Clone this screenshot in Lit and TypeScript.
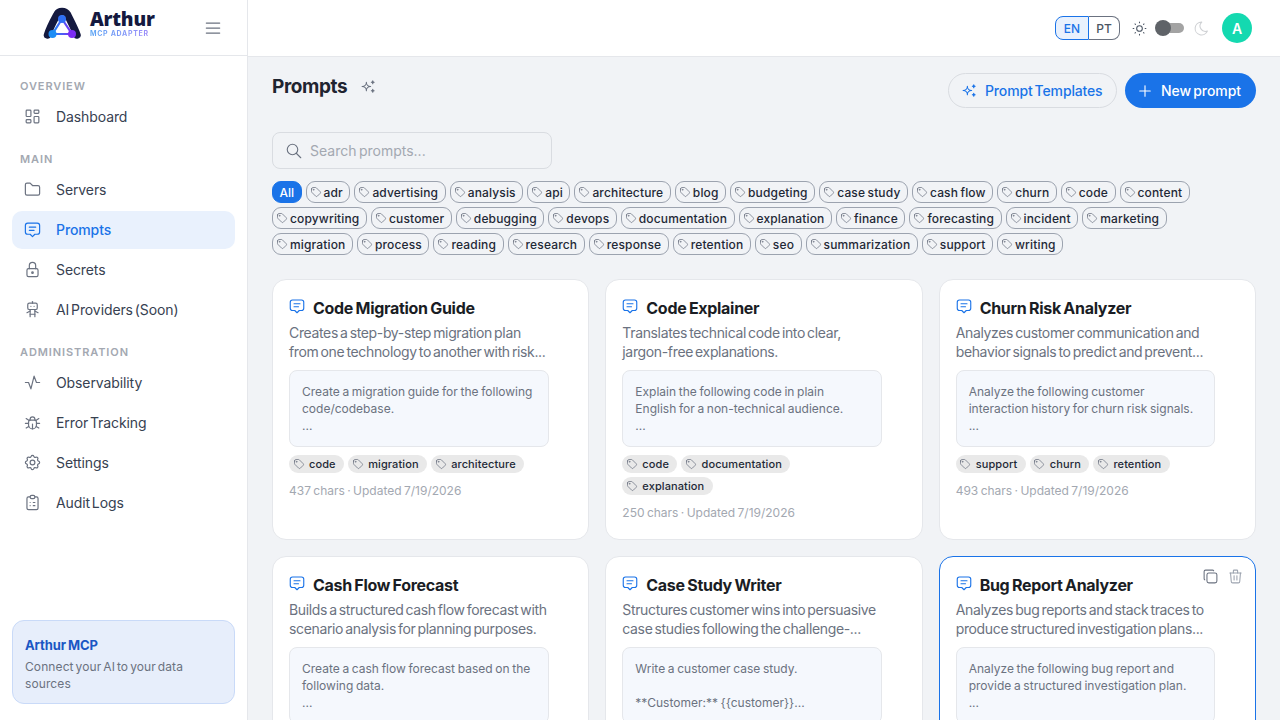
import { LitElement, html, css, svg } from "lit";
import { customElement } from "lit/decorators.js";

const I: Record<string, string[]> = {
  dashboard: ["M5 4h4a1 1 0 0 1 1 1v6a1 1 0 0 1 -1 1h-4a1 1 0 0 1 -1 -1v-6a1 1 0 0 1 1 -1", "M5 16h4a1 1 0 0 1 1 1v2a1 1 0 0 1 -1 1h-4a1 1 0 0 1 -1 -1v-2a1 1 0 0 1 1 -1", "M15 12h4a1 1 0 0 1 1 1v6a1 1 0 0 1 -1 1h-4a1 1 0 0 1 -1 -1v-6a1 1 0 0 1 1 -1", "M15 4h4a1 1 0 0 1 1 1v2a1 1 0 0 1 -1 1h-4a1 1 0 0 1 -1 -1v-2a1 1 0 0 1 1 -1"],
  folder: ["M5 4h4l3 3h7a2 2 0 0 1 2 2v8a2 2 0 0 1 -2 2h-14a2 2 0 0 1 -2 -2v-11a2 2 0 0 1 2 -2"],
  message: ["M8 9h8", "M8 13h6", "M9 18h-3a3 3 0 0 1 -3 -3v-8a3 3 0 0 1 3 -3h12a3 3 0 0 1 3 3v8a3 3 0 0 1 -3 3h-3l-3 3l-3 -3z"],
  lock: ["M5 13a2 2 0 0 1 2 -2h10a2 2 0 0 1 2 2v6a2 2 0 0 1 -2 2h-10a2 2 0 0 1 -2 -2v-6z", "M11 16a1 1 0 1 0 2 0a1 1 0 0 0 -2 0", "M8 11v-4a4 4 0 1 1 8 0v4"],
  robot: ["M6 6a2 2 0 0 1 2 -2h8a2 2 0 0 1 2 2v4a2 2 0 0 1 -2 2h-8a2 2 0 0 1 -2 -2z", "M12 2v2", "M9 12v9", "M15 12v9", "M5 16l4 -2", "M15 14l4 2", "M9 18h6", "M10 8v.01", "M14 8v.01"],
  activity: ["M3 12h4l3 8l4 -16l3 8h4"],
  bug: ["M9 9v-1a3 3 0 0 1 6 0v1", "M8 9h8a6 6 0 0 1 1 3v3a5 5 0 0 1 -10 0v-3a6 6 0 0 1 1 -3", "M3 13l4 0", "M17 13l4 0", "M12 20l0 -6", "M4 19l3.35 -2", "M20 19l-3.35 -2", "M4 7l3.75 2.4", "M20 7l-3.75 2.4"],
  settings: ["M10.325 4.317c.426 -1.756 2.924 -1.756 3.35 0a1.724 1.724 0 0 0 2.573 1.066c1.543 -.94 3.31 .826 2.37 2.37a1.724 1.724 0 0 0 1.065 2.572c1.756 .426 1.756 2.924 0 3.35a1.724 1.724 0 0 0 -1.066 2.573c.94 1.543 -.826 3.31 -2.37 2.37a1.724 1.724 0 0 0 -2.572 1.065c-.426 1.756 -2.924 1.756 -3.35 0a1.724 1.724 0 0 0 -2.573 -1.066c-1.543 .94 -3.31 -.826 -2.37 -2.37a1.724 1.724 0 0 0 -1.065 -2.572c-1.756 -.426 -1.756 -2.924 0 -3.35a1.724 1.724 0 0 0 1.066 -2.573c-.94 -1.543 .826 -3.31 2.37 -2.37c1 .608 2.296 .07 2.572 -1.065z", "M9 12a3 3 0 1 0 6 0a3 3 0 0 0 -6 0"],
  clipboard: ["M9 5h-2a2 2 0 0 0 -2 2v12a2 2 0 0 0 2 2h10a2 2 0 0 0 2 -2v-12a2 2 0 0 0 -2 -2h-2", "M9 5a2 2 0 0 1 2 -2h2a2 2 0 0 1 2 2v0a2 2 0 0 1 -2 2h-2a2 2 0 0 1 -2 -2z", "M9 12l.01 0", "M13 12l2 0", "M9 16l.01 0", "M13 16l2 0"],
  tag: ["M6.5 7.5a1 1 0 1 0 2 0a1 1 0 1 0 -2 0", "M3 6v5.172a2 2 0 0 0 .586 1.414l7.71 7.71a2.41 2.41 0 0 0 3.408 0l5.592 -5.592a2.41 2.41 0 0 0 0 -3.408l-7.71 -7.71a2 2 0 0 0 -1.414 -.586h-5.172a3 3 0 0 0 -3 3z"],
  sparkles: ["M16 18a2 2 0 0 1 2 2a2 2 0 0 1 2 -2a2 2 0 0 1 -2 -2a2 2 0 0 1 -2 2zm0 -12a2 2 0 0 1 2 2a2 2 0 0 1 2 -2a2 2 0 0 1 -2 -2a2 2 0 0 1 -2 2zm-7 12a6 6 0 0 1 6 -6a6 6 0 0 1 -6 -6a6 6 0 0 1 -6 6a6 6 0 0 1 6 6z"],
  search: ["M3 10a7 7 0 1 0 14 0a7 7 0 1 0 -14 0", "M21 21l-6 -6"],
  copy: ["M7 9.667a2.667 2.667 0 0 1 2.667 -2.667h8.666a2.667 2.667 0 0 1 2.667 2.667v8.666a2.667 2.667 0 0 1 -2.667 2.667h-8.666a2.667 2.667 0 0 1 -2.667 -2.667z", "M4.012 16.737a2.005 2.005 0 0 1 -1.012 -1.737v-10c0 -1.1 .9 -2 2 -2h10c.75 0 1.158 .385 1.5 1"],
  trash: ["M4 7l16 0", "M10 11l0 6", "M14 11l0 6", "M5 7l1 12a2 2 0 0 0 2 2h8a2 2 0 0 0 2 -2l1 -12", "M9 7v-3a1 1 0 0 1 1 -1h4a1 1 0 0 1 1 1v3"],
  sun: ["M8 12a4 4 0 1 0 8 0a4 4 0 1 0 -8 0", "M3 12h1m8 -9v1m8 8h1m-9 8v1m-6.4 -15.4l.7 .7m12.1 -.7l-.7 .7m0 11.4l.7 .7m-12.1 -.7l-.7 .7"],
  moon: ["M12 3c.132 0 .263 0 .393 0a7.5 7.5 0 0 0 7.92 12.446a9 9 0 1 1 -8.313 -12.454z"],
  menu: ["M4 6l16 0", "M4 12l16 0", "M4 18l16 0"],
  plus: ["M12 5l0 14", "M5 12l14 0"],
};

const icon = (name: string, size: number, sw = 1.5) => html`<svg class="ic" width=${size} height=${size} viewBox="0 0 24 24" fill="none" stroke="currentColor" stroke-width=${sw} stroke-linecap="round" stroke-linejoin="round">${I[name].map((d) => svg`<path d=${d}></path>`)}</svg>`;

const nav = [
  { label: "OVERVIEW", items: [["dashboard", "Dashboard"]] },
  { label: "MAIN", items: [["folder", "Servers"], ["message", "Prompts"], ["lock", "Secrets"], ["robot", "AI Providers (Soon)"]] },
  { label: "ADMINISTRATION", items: [["activity", "Observability"], ["bug", "Error Tracking"], ["settings", "Settings"], ["clipboard", "Audit Logs"]] },
];

const tagRows = [
  ["adr", "advertising", "analysis", "api", "architecture", "blog", "budgeting", "case study", "cash flow", "churn", "code", "content"],
  ["copywriting", "customer", "debugging", "devops", "documentation", "explanation", "finance", "forecasting", "incident", "marketing"],
  ["migration", "process", "reading", "research", "response", "retention", "seo", "summarization", "support", "writing"],
];

const cards = [
  { t: "Code Migration Guide", d: "Creates a step-by-step migration plan\nfrom one technology to another with risk...", p: "Create a migration guide for the following\ncode/codebase.\n...", tags: ["code", "migration", "architecture"], m: "437 chars · Updated 7/19/2026" },
  { t: "Code Explainer", d: "Translates technical code into clear,\njargon-free explanations.", p: "Explain the following code in plain\nEnglish for a non-technical audience.\n...", tags: ["code", "documentation", "explanation"], m: "250 chars · Updated 7/19/2026" },
  { t: "Churn Risk Analyzer", d: "Analyzes customer communication and\nbehavior signals to predict and prevent...", p: "Analyze the following customer\ninteraction history for churn risk signals.\n...", tags: ["support", "churn", "retention"], m: "493 chars · Updated 7/19/2026" },
  { t: "Cash Flow Forecast", d: "Builds a structured cash flow forecast with\nscenario analysis for planning purposes.", p: "Create a cash flow forecast based on the\nfollowing data.\n...", tags: ["finance", "cash flow", "forecasting"], m: "410 chars · Updated 7/19/2026" },
  { t: "Case Study Writer", d: "Structures customer wins into persuasive\ncase studies following the challenge-...", p: "Write a customer case study.\n\n**Customer:** {{customer}}...", tags: ["case study", "marketing", "writing"], m: "380 chars · Updated 7/19/2026" },
  { t: "Bug Report Analyzer", d: "Analyzes bug reports and stack traces to\nproduce structured investigation plans...", p: "Analyze the following bug report and\nprovide a structured investigation plan.\n...", tags: ["debugging", "analysis", "code"], m: "455 chars · Updated 7/19/2026", hover: true },
];

@customElement("app-root")
export class AppRoot extends LitElement {
  static styles = css`
    :host {
      display: block; width: 1280px; height: 720px; overflow: hidden;
      font-family: Inter, "Liberation Sans", sans-serif; word-spacing: -1.5px;
      color: #1f2937; background: #f1f3f6;
    }
    * { box-sizing: border-box; }
    .ic { display: block; flex: none; }
    .shell { display: flex; height: 720px; }
    .side { width: 248px; flex: none; background: #fff; border-right: 1px solid #e5e7eb; display: flex; flex-direction: column; }
    .brand { height: 56px; flex: none; border-bottom: 1px solid #e5e7eb; display: flex; align-items: center; padding-left: 43px; }
    .logo { margin-bottom: 8px; display: block; flex: none; }
    .logo-text { margin: 0 0 7.5px 7px; display: flex; flex-direction: column; width: 66px; }
    .arthur { font-family: "Open Sans", sans-serif; font-weight: 800; font-size: 19px; line-height: 17px; color: #14193f; letter-spacing: -.2px; }
    .adapter { margin-top: 2px; font-size: 7px; line-height: 7px; font-weight: 700; letter-spacing: .7px; white-space: nowrap; word-spacing: 0; background: linear-gradient(90deg, #5aa5f5, #a78bfa); -webkit-background-clip: text; background-clip: text; color: transparent; }
    .burger { margin-left: 47px; color: #6b7280; }
    .navwrap { flex: 1; padding: 22.5px 12px 0; }
    .sec { font-size: 11px; line-height: 16px; font-weight: 600; letter-spacing: .9px; color: #a3a8b1; padding-left: 8px; margin: -1px 0 4px; }
    .group { margin-bottom: 16px; }
    .item { height: 38px; margin-bottom: 2px; border-radius: 10px; display: flex; align-items: center; padding-left: 11px; gap: 14px; font-size: 14px; color: #374151; letter-spacing: -.1px; word-spacing: -2px; }
    .item .ic { color: #6b7280; }
    .item.on { background: #e9f1fd; color: #1a73e8; font-weight: 500; }
    .item.on .ic { color: #1a73e8; }
    .promo { margin: 0 12px 16px; height: 84px; border-radius: 12px; background: #e7eefb; border: 1px solid #c9daf8; padding: 15px 12px; }
    .promo b { display: block; font-size: 13px; line-height: 18px; font-weight: 700; letter-spacing: -.1px; word-spacing: -1px; color: #1a56c4; }
    .promo span { display: block; margin-top: 5px; font-size: 12px; line-height: 16.5px; color: #6b7280; letter-spacing: .1px; }
    .right { flex: 1; min-width: 0; display: flex; flex-direction: column; }
    .top { height: 57px; flex: none; background: #fff; border-bottom: 1px solid #e5e7eb; display: flex; align-items: center; justify-content: flex-end; padding-right: 28px; }
    .lang { display: flex; font-size: 12px; font-weight: 500; height: 24px; }
    .lang span { display: flex; align-items: center; justify-content: center; width: 33px; border: 1px solid #6b7280; color: #4b5563; }
    .lang span:first-child { border: 1px solid #1a73e8; background: #e9f1fd; color: #1a73e8; border-radius: 8px 0 0 8px; width: 34px; }
    .lang span:last-child { border-left: 0; border-radius: 0 8px 8px 0; width: 31px; }
    .sun { margin-left: 11px; color: #4b5563; }
    .toggle { margin-left: 7px; width: 30px; height: 16px; display: flex; align-items: center; position: relative; }
    .track { width: 28px; height: 10px; margin-left: 1px; border-radius: 5px; background: #a3a3a3; }
    .knob { position: absolute; left: 0; top: 0; width: 16px; height: 16px; border-radius: 50%; background: #5f6368; }
    .moon { margin-left: 8px; color: #cfd1d4; }
    .avatar { margin-left: 12px; width: 30px; height: 30px; border-radius: 50%; background: #14d9b0; color: #fff; font-size: 14px; font-weight: 600; display: flex; align-items: center; justify-content: center; }
    .main { flex: 1; padding: 16px 24px 0; overflow: hidden; }
    .head { display: flex; align-items: center; height: 35px; }
    .head h1 { margin: -8px 0 0; font-size: 19px; line-height: 28px; font-weight: 700; letter-spacing: -.4px; color: #1f2430; }
    .head .spark { margin: -8px 0 0 13px; color: #6b7280; }
    .btns { margin-left: auto; display: flex; gap: 8px; }
    .btn { height: 35px; border-radius: 18px; display: flex; align-items: center; font-size: 14px; font-weight: 500; gap: 7px; letter-spacing: -.05px; }
    .btn.ghost { width: 169px; border: 1px solid #d9dce1; color: #1a73e8; padding-left: 12px; letter-spacing: -.15px; }
    .btn.solid { width: 131px; background: #1a73e8; color: #fff; padding-left: 11px; }
    .search { margin-top: 24px; width: 280px; height: 37px; border: 1px solid #d9dce1; border-radius: 8px; display: flex; align-items: center; padding-left: 12px; gap: 7px; font-size: 14px; color: #a3a8b1; }
    .search .ic { color: #6b7280; }
    .tags { margin-top: 12px; display: flex; flex-direction: column; gap: 4px; }
    .row { display: flex; gap: 4px; }
    .chip { height: 22px; border-radius: 9px; border: 1px solid #9ca3af; display: flex; align-items: center; padding: 0 6.5px 0 3px; gap: 2px; font-size: 12px; font-weight: 500; letter-spacing: .15px; color: #1f2937; white-space: nowrap; word-spacing: -1px; }
    .chip .ic { color: #6b7280; }
    .chip.all { background: #1a73e8; border-color: #1a73e8; color: #fff; padding: 0 6.5px; letter-spacing: 0; }
    .grid { margin-top: 24px; display: grid; grid-template-columns: repeat(3, 1fr); gap: 16px; }
    .card { position: relative; background: #fff; border: 1px solid #e5e7eb; border-radius: 14px; padding: 16px 16px 18px; }
    .card.hover { border-color: #1a73e8; }
    .tline { display: flex; gap: 7px; align-items: flex-start; margin-bottom: 3px; }
    .tline .ic { color: #1a73e8; margin: 1px 0 0 -1px; }
    .tline h3 { margin: 0; font-size: 16px; line-height: 24px; font-weight: 700; letter-spacing: -.3px; word-spacing: -1px; color: #1a1d24; }
    .desc { margin: 0; font-size: 14px; line-height: 19px; color: #6b7280; letter-spacing: -.35px; word-spacing: -1.5px; white-space: pre-line; }
    .tool { position: absolute; top: 11px; right: 11px; display: flex; gap: 8px; color: #9ca3af; }
    .tool .ic:first-child { color: #6b7280; }
    .pbox { margin-top: 9px; width: 259.5px; border: 1px solid #e5e7eb; background: #f5f8fd; border-radius: 8px; padding: 12px; font-size: 12px; line-height: 17px; color: #6b7280; white-space: pre-line; word-spacing: -.7px; }
    .ctags { margin-top: 8px; max-width: 258px; display: flex; flex-wrap: wrap; gap: 4px; }
    .ct { height: 18px; border-radius: 9px; background: #e9e9e9; display: flex; align-items: center; padding: 0 8.5px 0 3.5px; gap: 4.5px; font-size: 11px; font-weight: 500; letter-spacing: .1px; color: #1f2937; white-space: nowrap; word-spacing: 0; }
    .ct .ic { color: #6b7280; }
    .meta { margin-top: 9px; font-size: 12px; line-height: 17px; color: #a3a8b1; word-spacing: -1px; }
  `;

  render() {
    return html`<div class="shell">
      <aside class="side">
        <div class="brand">
          <svg class="logo" width="40" height="33" viewBox="0 0 40 33" fill="none">
            <defs><linearGradient id="lg" x1="9" y1="0" x2="29" y2="0" gradientUnits="userSpaceOnUse"><stop offset="0" stop-color="#1d8df5"/><stop offset="1" stop-color="#7c2df5"/></linearGradient></defs>
            <path d="M4.500 28C7 20 11 13 14 7.500C16 3.500 22 3.500 24.500 7.500C27 13 31 20 34 28" stroke="#14193f" stroke-width="7.500" stroke-linecap="round"/>
            <path d="M19 12L9.500 27H29L19 12Z" stroke="url(#lg)" stroke-width="2.200" fill="#fff"/>
            <circle cx="19" cy="12" r="4" fill="#2f6ff5"/><circle cx="9.500" cy="27" r="4" fill="#1d8df5"/><circle cx="29" cy="27" r="4" fill="#7c2df5"/>
          </svg>
          <div class="logo-text"><span class="arthur">Arthur</span><span class="adapter">MCP ADAPTER</span></div>
          <span class="burger">${icon("menu", 20)}</span>
        </div>
        <div class="navwrap">
          ${nav.map((g) => html`<div class="group"><div class="sec">${g.label}</div>
            ${g.items.map(([ic, l]) => html`<div class="item ${l === "Prompts" ? "on" : ""}">${icon(ic, 19)}<span>${l}</span></div>`)}
          </div>`)}
        </div>
        <div class="promo"><b>Arthur MCP</b><span>Connect your AI to your data sources</span></div>
      </aside>
      <div class="right">
        <header class="top">
          <div class="lang"><span>EN</span><span>PT</span></div>
          <span class="sun">${icon("sun", 17)}</span>
          <div class="toggle"><div class="track"></div><div class="knob"></div></div>
          <span class="moon">${icon("moon", 17)}</span>
          <div class="avatar">A</div>
        </header>
        <main class="main">
          <div class="head">
            <h1>Prompts</h1><span class="spark">${icon("sparkles", 17)}</span>
            <div class="btns">
              <div class="btn ghost">${icon("sparkles", 17)}<span>Prompt Templates</span></div>
              <div class="btn solid">${icon("plus", 18)}<span>New prompt</span></div>
            </div>
          </div>
          <div class="search">${icon("search", 18)}<span>Search prompts...</span></div>
          <div class="tags">
            ${tagRows.map((r, i) => html`<div class="row">${i === 0 ? html`<div class="chip all">All</div>` : ""}${r.map((t) => html`<div class="chip">${icon("tag", 12)}<span>${t}</span></div>`)}</div>`)}
          </div>
          <div class="grid">
            ${cards.map((c) => html`<article class="card ${c.hover ? "hover" : ""}">
              ${c.hover ? html`<div class="tool">${icon("copy", 17)}${icon("trash", 17)}</div>` : ""}
              <div class="tline">${icon("message", 18)}<h3>${c.t}</h3></div>
              <p class="desc">${c.d}</p>
              <div class="pbox">${c.p}</div>
              <div class="ctags">${c.tags.map((t) => html`<div class="ct">${icon("tag", 12)}<span>${t}</span></div>`)}</div>
              <div class="meta">${c.m}</div>
            </article>`)}
          </div>
        </main>
      </div>
    </div>`;
  }
}
